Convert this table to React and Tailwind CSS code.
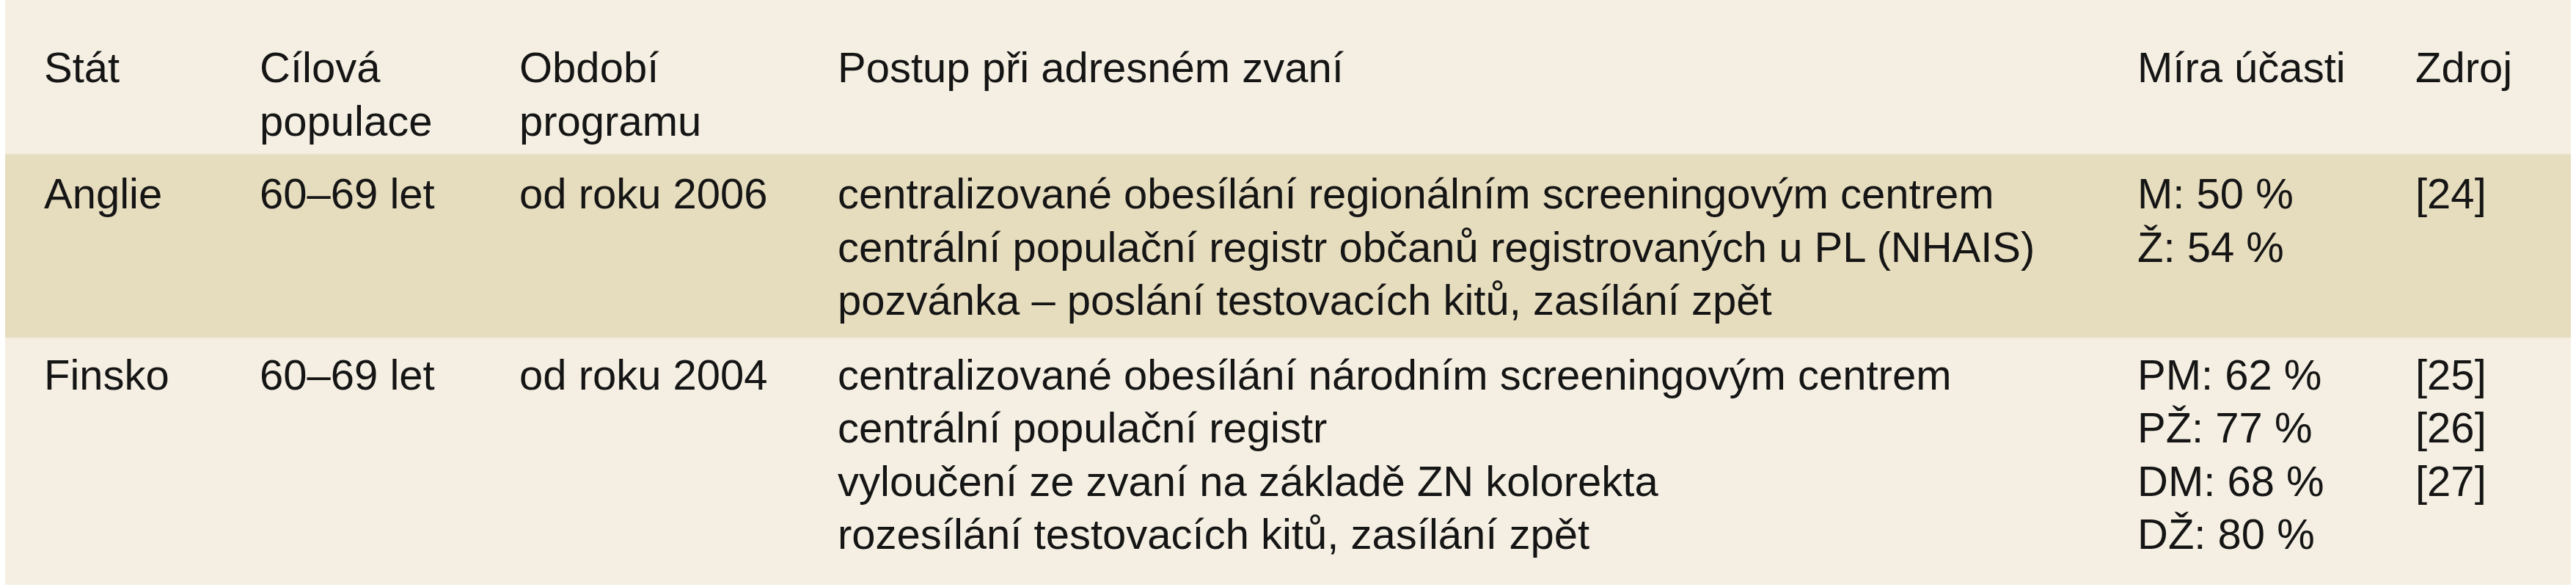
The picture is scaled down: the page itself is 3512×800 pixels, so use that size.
import React from "react";

const cols = "grid grid-cols-[294px_354px_434px_1772px_379px_1fr] pl-[53px]";

function Lines({ items }) {
  return (
    <div>
      {items.map((t, i) => (
        <div key={i} className="whitespace-nowrap">
          {t}
        </div>
      ))}
    </div>
  );
}

const rows = [
  {
    bg: "bg-[#e6dcbe]",
    pad: "pt-[17px] pb-[13px]",
    cells: [
      ["Anglie"],
      ["60–69 let"],
      ["od roku 2006"],
      [
        "centralizované obesílání regionálním screeningovým centrem",
        "centrální populační registr občanů registrovaných u PL (NHAIS)",
        "pozvánka – poslání testovacích kitů, zasílání zpět",
      ],
      ["M: 50 %", "Ž: 54 %"],
      ["[24]"],
    ],
  },
  {
    bg: "bg-[#f4efe2]",
    pad: "pt-[14px] pb-[32px]",
    cells: [
      ["Finsko"],
      ["60–69 let"],
      ["od roku 2004"],
      [
        "centralizované obesílání národním screeningovým centrem",
        "centrální populační registr",
        "vyloučení ze zvaní na základě ZN kolorekta",
        "rozesílání testovacích kitů, zasílání zpět",
      ],
      ["PM: 62 %", "PŽ: 77 %", "DM: 68 %", "DŽ: 80 %"],
      ["[25]", "[26]", "[27]"],
    ],
  },
];

export default function App() {
  return (
    <div
      className="w-[3512px] h-[800px] bg-white px-[7px] text-[58px] text-[#151515]"
      style={{ fontFamily: "'Liberation Sans', Arial, sans-serif" }}
    >
      <div className={`${cols} bg-[#f4efe2] pt-[55px] pb-[8px] leading-[73px]`}>
        <Lines items={["Stát"]} />
        <Lines items={["Cílová", "populace"]} />
        <Lines items={["Období", "programu"]} />
        <Lines items={["Postup při adresném zvaní"]} />
        <Lines items={["Míra účasti"]} />
        <Lines items={["Zdroj"]} />
      </div>
      {rows.map((r, i) => (
        <div key={i} className={`${cols} ${r.bg} ${r.pad} leading-[72.5px] border-t-[2px] border-[#ece5d0]`}>
          {r.cells.map((c, j) => (
            <Lines key={j} items={c} />
          ))}
        </div>
      ))}
    </div>
  );
}
